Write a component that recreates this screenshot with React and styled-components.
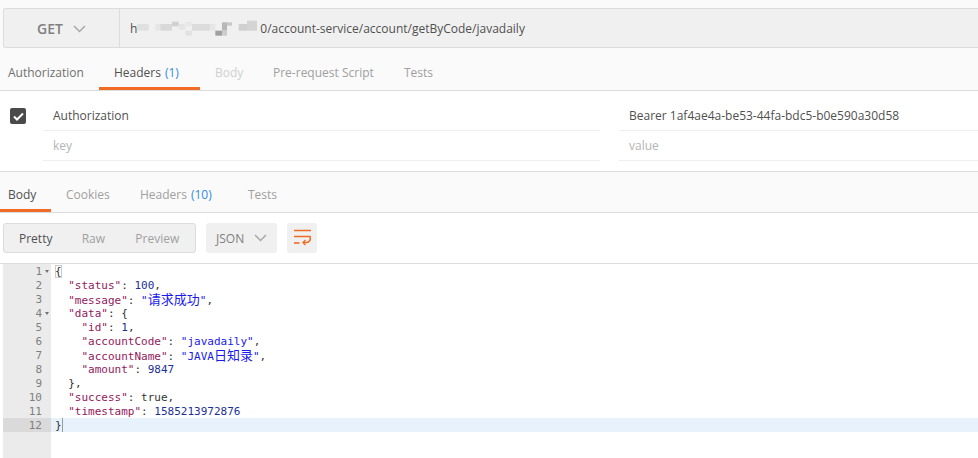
import React from 'react';
import styled, { createGlobalStyle } from 'styled-components';

const Global = createGlobalStyle`
  html, body { margin: 0; padding: 0; background: #fff; }
  body { font-family: "Open Sans", "Noto Sans CJK SC", sans-serif; font-size: 12px; color: #505050; }
  * { box-sizing: border-box; }
`;
const Page = styled.div`width: 978px; height: 458px; overflow: hidden; display: flex; flex-direction: column; background: #fff;`;
const Top = styled.div`height: 91px; background: #fafafa; padding-top: 8px; border-bottom: 1px solid #dcdcdc; display: flex; flex-direction: column;`;
const UrlBar = styled.div`height: 40px; margin-left: 3px; background: #f0f0f0; border: 1px solid #dcdcdc; border-right: none; border-radius: 3px 0 0 3px; display: flex; align-items: center;`;
const Method = styled.div`width: 116px; height: 100%; border-right: 1px solid #dcdcdc; display: flex; align-items: center; gap: 10px; padding: 1px 0 0 33px; font-size: 14px; font-weight: 600; color: #808080;`;
const UrlText = styled.div`padding: 1px 0 0 10px; display: flex; align-items: center; font-size: 12px; color: #505050;`;
const Tabs = styled.div`display: flex; height: 42px; align-items: stretch;`;
const Tab = styled.div`
  width: ${p => p.$w}px; padding: ${p => p.$pt}px 0 0 ${p => p.$pl}px; display: flex; align-items: center; gap: 4px; font-size: 12px;
  color: ${p => p.$c};
  border-bottom: 3px solid ${p => p.$on ? '#f26b26' : 'transparent'};
`;
const Count = styled.span`color: #2f8de4;`;
const Params = styled.div`height: 81px; padding-top: 10px; border-bottom: 1px solid #dcdcdc; display: grid; grid-template-columns: 43px 557px 19px 1fr; grid-template-rows: 30px 30px;`;
const CheckCell = styled.div`display: flex; align-items: center; padding-left: 10px;`;
const Check = styled.div`width: 16px; height: 16px; border-radius: 2px; background: #4a4a4a; display: flex; align-items: center; justify-content: center;`;
const Cell = styled.div`border-bottom: 1px solid #efefef; padding-left: 10px; display: flex; align-items: center; font-size: 12px; color: ${p => p.$ph ? '#b4b4b4' : '#505050'};`;
const Gap = styled.div``;
const ResTabs = styled.div`height: 41px; background: #fafafa; border-bottom: 1px solid #dcdcdc; display: flex;`;
const Toolbar = styled.div`height: 51px; padding: 10px 0 0 3px; border-bottom: 1px solid #dcdcdc; display: flex; align-items: flex-start;`;
const Modes = styled.div`width: 193px; height: 30px; background: #f0f0f0; border: 1px solid #dcdcdc; border-radius: 3px; display: flex; align-items: center; font-size: 12px;`;
const Mode = styled.span`width: ${p => p.$w}px; padding-left: ${p => p.$pl}px; color: ${p => p.$on ? '#505050' : '#a0a0a0'};`;
const Select = styled.div`margin-left: 10px; width: 71px; height: 30px; background: #f0f0f0; border-radius: 3px; display: flex; align-items: center; gap: 10px; padding-left: 10px; color: #808080; font-size: 12px;`;
const Wrap = styled.div`margin-left: 10px; width: 30px; height: 30px; background: #f0f0f0; border-radius: 3px; display: flex; align-items: center; justify-content: center;`;
const Code = styled.div`flex: 1; margin-left: 3px; display: flex; font-family: "DejaVu Sans Mono", monospace; font-size: 11px; line-height: 16px;`;
const Gutter = styled.div`width: 48px; background: #ebebeb; color: #808080; flex-shrink: 0;`;
const Num = styled.div`height: 14px; position: relative; text-align: right; padding-right: 9px; background: ${p => p.$active ? '#dadada' : 'transparent'};`;
const Fold = styled.span`position: absolute; right: 2px; top: 6px; width: 0; height: 0; border-left: 2.5px solid transparent; border-right: 2.5px solid transparent; border-top: 3px solid #707070;`;
const Lines = styled.div`flex: 1; min-width: 0;`;
const Line = styled.div`height: 14px; white-space: pre; padding-left: 4px; color: #333; background: ${p => p.$active ? '#e8f2fc' : 'transparent'};`;
const Key = styled.span`color: #92195c;`;
const Str = styled.span`color: #1a1aee;`;
const Cjk = styled.span`display: inline-block; height: 14px; font-family: "Noto Sans CJK SC", sans-serif; font-size: 13px; line-height: 14px;`;
const Nr = styled.span`color: #1c2f97;`;
const Brace = styled.span`outline: 1px solid #ccc; outline-offset: -1px;`;
const Caret = styled.span`display: inline-block; width: 1px; height: 14px; background: #999; vertical-align: top;`;

const Chevron = () => (
  <svg width="13" height="8" viewBox="0 0 13 8" fill="none"><path d="M1 1l5.5 5.5L12 1" stroke="#a8a8a8" strokeWidth="1.5" /></svg>
);
const Mosaic = () => {
  const blocks = [[50,45,35,20,'#e0e0e0'],[105,45,15,20,'#e6e6e6'],[120,45,35,20,'#d8d8d8'],[155,38,20,14,'#d0d0d0'],[175,45,20,17,'#e5e5e5'],[195,38,20,14,'#e8e8e8'],[195,65,20,15,'#e2e2e2'],[215,45,55,20,'#dcdcdc'],[270,45,15,20,'#e6e6e6'],[285,65,20,15,'#a0a0a0'],[305,40,15,25,'#b8b8b8'],[305,65,15,15,'#cccccc'],[320,40,15,10,'#c8c8c8'],[355,45,25,20,'#d0d0d0'],[380,35,30,30,'#d4d4d4']];
  return (
    <svg width="123" height="18" viewBox="0 0 123 18">
      {blocks.map(([x, y, w, h, f], i) => <rect key={i} x={(x - 50) / 3} y={(y - 33) / 3} width={w / 3} height={h / 3} fill={f} />)}
    </svg>
  );
};

const nums = [1,2,3,4,5,6,7,8,9,10,11,12];

export default function App() {
  return (
    <Page>
      <Global />
      <Top>
        <UrlBar>
          <Method>GET <Chevron /></Method>
          <UrlText>h<Mosaic />0/account-service/account/getByCode/javadaily</UrlText>
        </UrlBar>
        <Tabs>
          <Tab $w={99} $pt={9} $pl={8} $c="#707070">Authorization</Tab>
          <Tab $w={101} $pt={9} $pl={15} $c="#505050" $on>Headers <Count>(1)</Count></Tab>
          <Tab $w={58} $pt={9} $pl={15} $c="#d0d0d0">Body</Tab>
          <Tab $w={131} $pt={9} $pl={15} $c="#a0a0a0">Pre-request Script</Tab>
          <Tab $w={80} $pt={9} $pl={15} $c="#a0a0a0">Tests</Tab>
        </Tabs>
      </Top>
      <Params>
        <CheckCell>
          <Check>
            <svg width="11" height="9" viewBox="0 0 11 9" fill="none"><path d="M1 4.5l3 3L10 1.5" stroke="#fff" strokeWidth="2" /></svg>
          </Check>
        </CheckCell>
        <Cell>Authorization</Cell><Gap />
        <Cell>Bearer 1af4ae4a-be53-44fa-bdc5-b0e590a30d58</Cell>
        <div />
        <Cell $ph>key</Cell><Gap />
        <Cell $ph>value</Cell>
      </Params>
      <ResTabs>
        <Tab $w={51} $pt={7} $pl={8} $c="#505050" $on>Body</Tab>
        <Tab $w={65} $pt={7} $pl={15} $c="#a0a0a0">Cookies</Tab>
        <Tab $w={100} $pt={7} $pl={24} $c="#a0a0a0">Headers <Count>(10)</Count></Tab>
        <Tab $w={80} $pt={7} $pl={32} $c="#a0a0a0">Tests</Tab>
      </ResTabs>
      <Toolbar>
        <Modes>
          <Mode $w={78} $pl={15} $on>Pretty</Mode>
          <Mode $w={54} $pl={0}>Raw</Mode>
          <Mode $w={60} $pl={0}>Preview</Mode>
        </Modes>
        <Select>JSON <Chevron /></Select>
        <Wrap>
          <svg width="17" height="18" viewBox="0 0 17 18" fill="none" stroke="#f26b26" strokeWidth="1.6">
            <path d="M0 1.5h17M0 7.5h16c1 3-.5 6-3.500 6H9" />
            <path d="M0 14h5.500" />
            <path d="M11.500 11L9 13.500l2.500 2.500" strokeWidth="1.300" />
          </svg>
        </Wrap>
      </Toolbar>
      <Code>
        <Gutter>
          {nums.map(n => (
            <Num key={n} $active={n === 12}>{n}{(n === 1 || n === 4) && <Fold />}</Num>
          ))}
        </Gutter>
        <Lines>
          <Line><Brace>{'{'}</Brace></Line>
          <Line>  <Key>"status"</Key>: <Nr>100</Nr>,</Line>
          <Line>  <Key>"message"</Key>: <Str>"<Cjk>请求成功</Cjk>"</Str>,</Line>
          <Line>  <Key>"data"</Key>: {'{'}</Line>
          <Line>    <Key>"id"</Key>: <Nr>1</Nr>,</Line>
          <Line>    <Key>"accountCode"</Key>: <Str>"javadaily"</Str>,</Line>
          <Line>    <Key>"accountName"</Key>: <Str>"JAVA<Cjk>日知录</Cjk>"</Str>,</Line>
          <Line>    <Key>"amount"</Key>: <Nr>9847</Nr></Line>
          <Line>  {'}'},</Line>
          <Line>  <Key>"success"</Key>: true,</Line>
          <Line>  <Key>"timestamp"</Key>: <Nr>1585213972876</Nr></Line>
          <Line $active>{'}'}<Caret /></Line>
        </Lines>
      </Code>
    </Page>
  );
}
